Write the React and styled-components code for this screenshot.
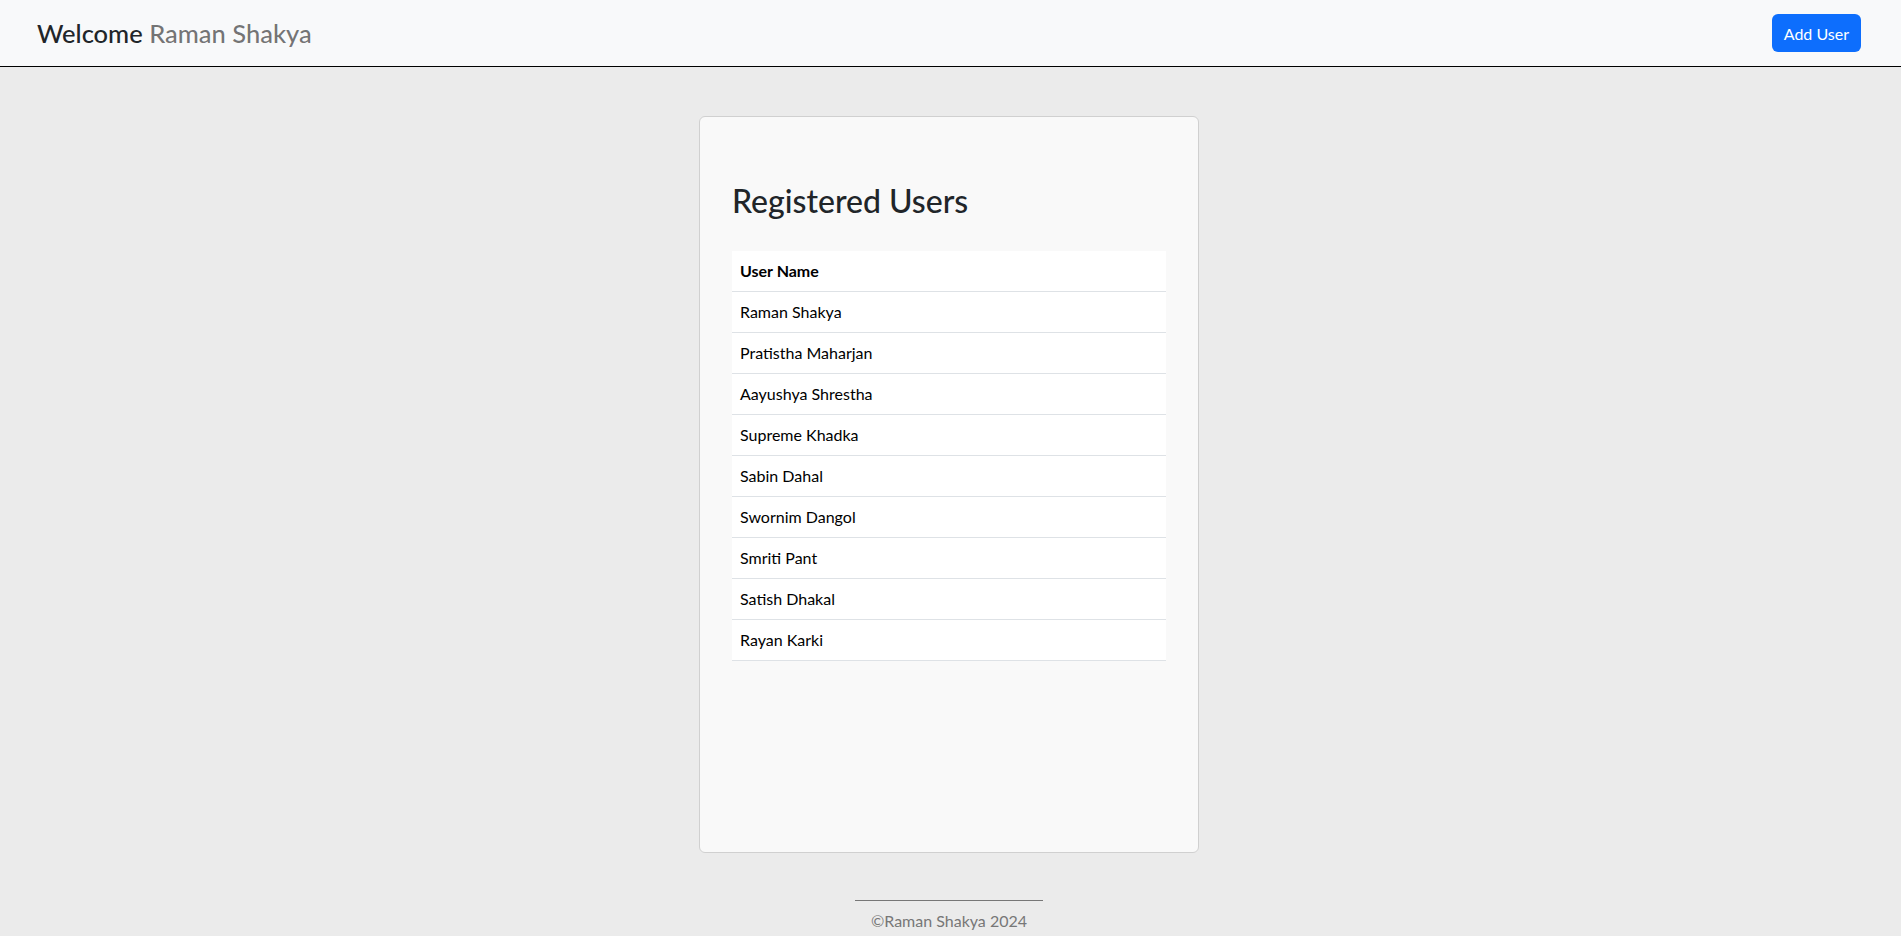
import styled, { createGlobalStyle } from "styled-components";

const GlobalStyle = createGlobalStyle`
  * {
    box-sizing: border-box;
  }
  body {
    margin: 0;
    background-color: #ebebeb;
    font-family: Lato, "Open Sans", sans-serif;
    color: #212529;
  }
`;

const Navbar = styled.nav`
  height: 67px;
  background-color: #f8f9fa;
  border-bottom: 1px solid #000;
  display: flex;
  align-items: center;
  justify-content: space-between;
  padding: 0 40px 0 37px;
`;

const Brand = styled.div`
  font-size: 25.5px;
  font-weight: 500;
  color: #212529;
`;

const BrandName = styled.span`
  color: rgba(0, 0, 0, 0.55);
`;

const Button = styled.button`
  height: 38px;
  padding: 0 12px;
  background-color: #0d6efd;
  color: #fff;
  border: none;
  border-radius: 6px;
  font-family: inherit;
  font-size: 16px;
  cursor: pointer;
`;

const Main = styled.main`
  display: flex;
  justify-content: center;
  padding: 49px 3px 0 0;
`;

const Card = styled.section`
  width: 500px;
  height: 737px;
  background-color: #f9f9f9;
  border: 1px solid #d0d0d0;
  border-radius: 6px;
  padding: 65px 32px 32px;
`;

const Title = styled.h2`
  font-size: 32px;
  font-weight: 500;
  line-height: 1.2;
  margin: 0 0 31px;
  color: #212529;
`;

const Table = styled.table`
  width: 100%;
  border-collapse: collapse;
  background-color: #fff;
`;

const Cell = styled.td`
  padding: 8px;
  font-size: 16px;
  line-height: 24px;
  text-align: left;
  border-bottom: 1px solid #dee2e6;
  font-weight: ${(p) => (p.$head ? 700 : 400)};
  color: #000;
`;

const Footer = styled.footer`
  display: flex;
  flex-direction: column;
  align-items: center;
  padding: 47px 3px 16px 0;
`;

const Rule = styled.hr`
  width: 188px;
  margin: 0 0 8px;
  border: none;
  border-top: 1px solid #777;
`;

const Copy = styled.p`
  margin: 0;
  font-size: 16px;
  line-height: 24px;
  color: #777;
`;

const users = [
  "Raman Shakya",
  "Pratistha Maharjan",
  "Aayushya Shrestha",
  "Supreme Khadka",
  "Sabin Dahal",
  "Swornim Dangol",
  "Smriti Pant",
  "Satish Dhakal",
  "Rayan Karki",
];

function App() {
  return (
    <>
      <GlobalStyle />
      <Navbar>
        <Brand>
          Welcome <BrandName>Raman Shakya</BrandName>
        </Brand>
        <Button>Add User</Button>
      </Navbar>
      <Main>
        <Card>
          <Title>Registered Users</Title>
          <Table>
            <thead>
              <tr>
                <Cell as="th" $head>
                  User Name
                </Cell>
              </tr>
            </thead>
            <tbody>
              {users.map((u) => (
                <tr key={u}>
                  <Cell>{u}</Cell>
                </tr>
              ))}
            </tbody>
          </Table>
        </Card>
      </Main>
      <Footer>
        <Rule />
        <Copy>©Raman Shakya 2024</Copy>
      </Footer>
    </>
  );
}

export default App;
